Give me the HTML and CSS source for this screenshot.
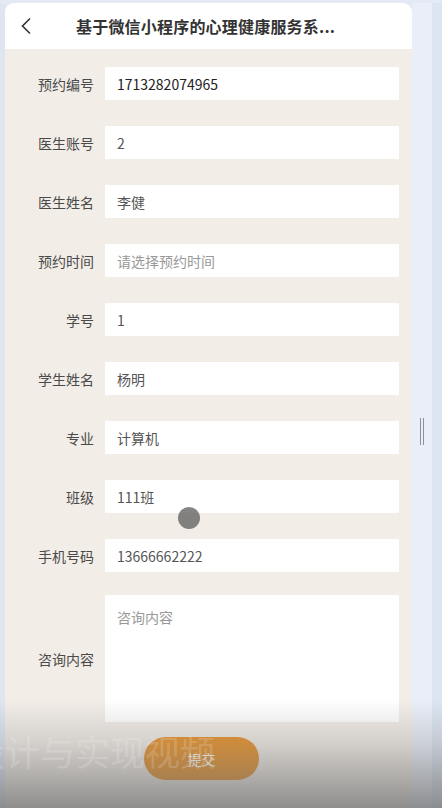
FILE: index.html
```html
<!DOCTYPE html>
<html lang="zh-CN">
<head>
    <meta charset="UTF-8">
    <meta name="viewport" content="width=device-width, initial-scale=1.0">
    <title>心理咨询预约</title>
    <link rel="stylesheet" href="styles.css">
</head>
<body>
    <div class="screen">
        <div class="edge-left"></div>
        <div class="phone">
            <header class="topbar">
                <svg class="back" width="12" height="18" viewBox="0 0 12 18">
                    <path d="M10 1.5 L2.5 9 L10 16.5" fill="none" stroke="#333" stroke-width="1.6"/>
                </svg>
                <h1>基于微信小程序的心理健康服务系...</h1>
            </header>

            <form class="form">
                <div class="row">
                    <label>预约编号</label>
                    <div class="field strong">1713282074965</div>
                </div>
                <div class="row">
                    <label>医生账号</label>
                    <div class="field">2</div>
                </div>
                <div class="row">
                    <label>医生姓名</label>
                    <div class="field">李健</div>
                </div>
                <div class="row">
                    <label>预约时间</label>
                    <div class="field hint">请选择预约时间</div>
                </div>
                <div class="row">
                    <label>学号</label>
                    <div class="field">1</div>
                </div>
                <div class="row">
                    <label>学生姓名</label>
                    <div class="field">杨明</div>
                </div>
                <div class="row">
                    <label>专业</label>
                    <div class="field">计算机</div>
                </div>
                <div class="row">
                    <label>班级</label>
                    <div class="field">111班</div>
                </div>
                <div class="row">
                    <label>手机号码</label>
                    <div class="field">13666662222</div>
                </div>
                <div class="row area">
                    <label>咨询内容</label>
                    <div class="field textarea hint">咨询内容</div>
                </div>
                <div class="actions">
                    <button type="button" class="submit">提交</button>
                </div>
            </form>
        </div>
        <div class="side">
            <span class="grip"></span>
        </div>
        <div class="edge-right"></div>
    </div>

    <!-- video overlay bits -->
    <div class="cursor"></div>
    <div class="shade"></div>
    <div class="watermark">设计与实现视频</div>
</body>
</html>
```

FILE: styles.css
```css
body {
    margin: 0;
    padding: 0;
    background-color: #e3eaf5;
    font-family: "Noto Sans CJK SC", "Noto Sans", sans-serif;
    overflow: hidden;
}
.screen {
    display: flex;
    height: 808px;
    padding-top: 3px;
    box-sizing: border-box;
}
.edge-left {
    width: 5px;
    background: #dfe6f2;
}
.phone {
    width: 407px;
    background: #f2ede7;
    border-radius: 9px 9px 0 0;
    overflow: hidden;
}
.topbar {
    height: 46px;
    background: #fff;
    display: flex;
    align-items: center;
    padding-left: 15px;
}
.back {
    margin-right: 44px;
}
.topbar h1 {
    margin: 0;
    font-size: 16px;
    font-weight: bold;
    color: #333;
    letter-spacing: 0.2px;
}
.form {
    padding: 18px 13px 0 0;
}
.row {
    display: flex;
    align-items: center;
    margin-bottom: 26px;
}
.row label {
    width: 89px;
    padding-right: 11px;
    text-align: right;
    font-size: 14px;
    color: #4a4a4a;
}
.field {
    flex: 1;
    height: 33px;
    background: #fff;
    display: flex;
    align-items: center;
    padding-left: 12px;
    font-size: 14px;
    color: #555;
}
.field.strong {
    color: #222;
}
.field.hint {
    color: #999;
}
.row.area {
    margin-top: -3px;
    margin-bottom: 15px;
}
.field.textarea {
    height: 127px;
    align-items: flex-start;
    padding-top: 12px;
    box-sizing: border-box;
}
.actions {
    padding-left: 139px;
}
.submit {
    width: 115px;
    height: 43px;
    border: none;
    border-radius: 22px;
    background: #e8922a;
    color: #fff;
    font-family: inherit;
    font-size: 14px;
}
.side {
    width: 20px;
    background: #e9eef8;
    display: flex;
    align-items: flex-start;
    justify-content: center;
    padding-top: 415px;
    box-sizing: border-box;
}
.grip {
    width: 2px;
    height: 27px;
    border-left: 1px solid #8a8f98;
    border-right: 1px solid #8a8f98;
}
.edge-right {
    width: 10px;
    background: #dce5f2;
}
.cursor {
    position: absolute;
    left: 178px;
    top: 507px;
    width: 22px;
    height: 22px;
    border-radius: 50%;
    background: rgba(100, 100, 100, 0.8);
}
.shade {
    position: absolute;
    left: 0;
    right: 0;
    top: 700px;
    height: 108px;
    background: linear-gradient(to bottom, rgba(120, 120, 120, 0), rgba(120, 120, 120, 0.25) 40%, rgba(110, 110, 110, 0.75));
}
.watermark {
    position: absolute;
    left: -30px;
    top: 729px;
    font-size: 35px;
    line-height: 44px;
    color: rgba(255, 255, 255, 0.18);
    white-space: nowrap;
}
```
